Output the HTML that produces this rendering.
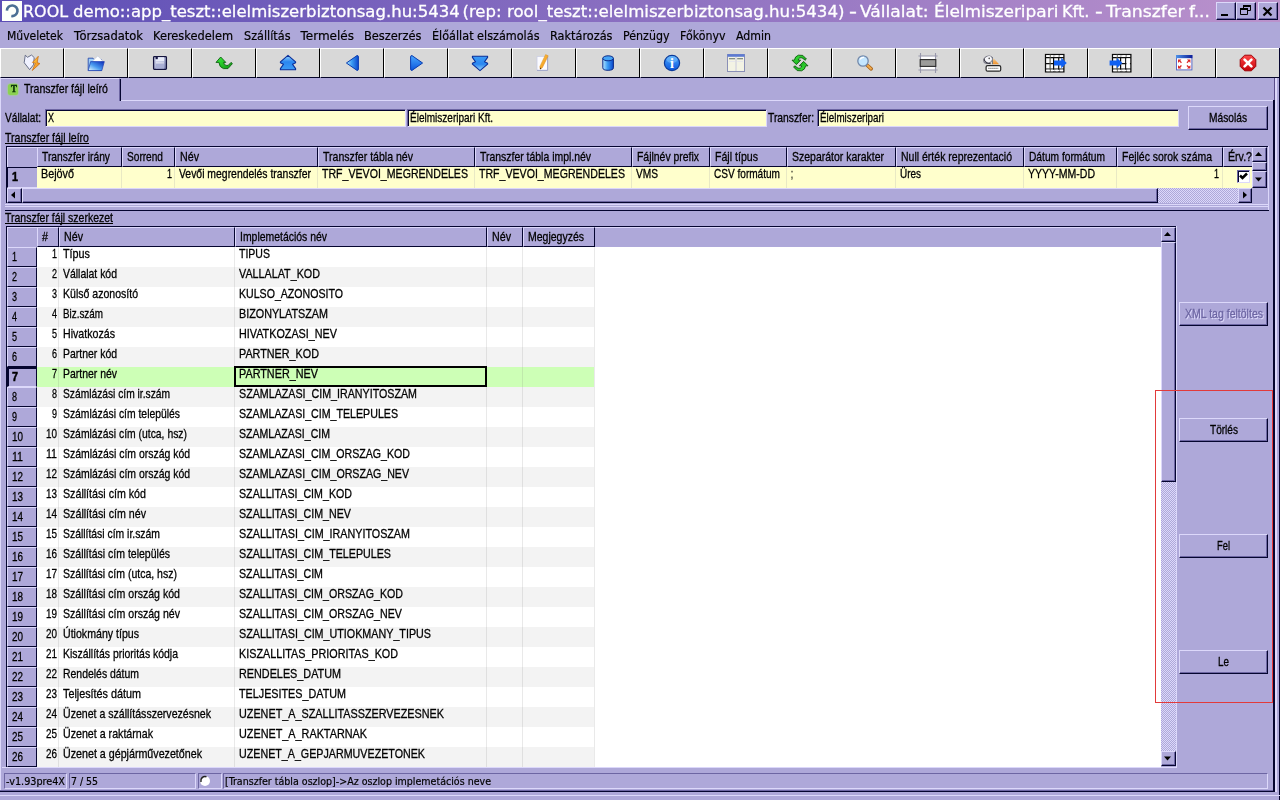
<!DOCTYPE html><html lang="hu"><head><meta charset="utf-8"><title>ROOL demo - Transzfer fájl leíró</title><style>
html,body{margin:0;padding:0}
body{width:1280px;height:800px;position:relative;overflow:hidden;background:#aea8d9;font-family:"Liberation Sans",sans-serif;color:#000}
body div{position:absolute;box-sizing:border-box}
svg{position:absolute;overflow:visible}
.t{position:absolute;white-space:nowrap;transform-origin:0 0;display:block}
.ms{font-size:13px;line-height:15px;-webkit-text-stroke-width:.3px}
.msb{font-size:13px;line-height:15px;font-weight:bold;-webkit-text-stroke-width:.55px}
.menu{font-family:"DejaVu Sans",sans-serif;font-size:12px;line-height:15px;-webkit-text-stroke-width:.2px}
.title{font-family:"DejaVu Sans",sans-serif;font-size:16.5px;line-height:21px;color:#fff;-webkit-text-stroke-width:.3px}
.st{font-family:"DejaVu Sans Condensed","DejaVu Sans",sans-serif;font-size:11px;line-height:14px;-webkit-text-stroke-width:.2px}

</style></head><body>
<div style="left:0px;top:0px;width:1280px;height:22px;background:linear-gradient(90deg,#5c4eb6,#bb92cc)"></div>
<div style="left:2px;top:1px;width:20px;height:20px;background:#fdfffb"><svg width="20" height="20" viewBox="0 0 20 20"><path d="M4.9 9.6 A5.3 5.3 0 1 1 9.3 15" fill="none" stroke="#4b6f94" stroke-width="2.6"/></svg></div>
<div style="left:1216px;top:2px;width:20px;height:18px;background:#aea8d9;border:1px solid;border-color:#dcd8fa #05052f #05052f #dcd8fa;box-shadow:inset -1px -1px 0 #6d66a3"><svg width="18" height="16"><rect x="4" y="11" width="7" height="2" fill="#000"/></svg></div>
<div style="left:1236px;top:2px;width:20px;height:18px;background:#aea8d9;border:1px solid;border-color:#dcd8fa #05052f #05052f #dcd8fa;box-shadow:inset -1px -1px 0 #6d66a3"><svg width="18" height="16"><path d="M6.5 2.5h7v5h-7z M6 3.5h8" fill="none" stroke="#000" stroke-width="1"/><rect x="6" y="2" width="8" height="2" fill="#000"/><rect x="3" y="5" width="8" height="7" fill="#aea8d9"/><path d="M3.5 6.5h7v5h-7z" fill="none" stroke="#000"/><rect x="3" y="5" width="8" height="2" fill="#000"/></svg></div>
<div style="left:1258px;top:2px;width:20px;height:18px;background:#aea8d9;border:1px solid;border-color:#dcd8fa #05052f #05052f #dcd8fa;box-shadow:inset -1px -1px 0 #6d66a3"><svg width="18" height="16"><path d="M4.5 4.5 L12.5 12.5 M12.5 4.5 L4.5 12.5" stroke="#000" stroke-width="2.2" fill="none"/></svg></div>
<div style="left:0px;top:48px;width:1280px;height:30px;background:#05052f"></div>
<div style="left:0px;top:48px;width:64px;height:30px;background:#d8d8d8;border:1px solid;border-color:#fff #000 #05052a #fff"></div>
<div style="left:64px;top:48px;width:64px;height:30px;background:#d8d8d8;border:1px solid;border-color:#fff #000 #05052a #fff"></div>
<div style="left:128px;top:48px;width:64px;height:30px;background:#d8d8d8;border:1px solid;border-color:#fff #000 #05052a #fff"></div>
<div style="left:192px;top:48px;width:64px;height:30px;background:#d8d8d8;border:1px solid;border-color:#fff #000 #05052a #fff"></div>
<div style="left:256px;top:48px;width:64px;height:30px;background:#d8d8d8;border:1px solid;border-color:#fff #000 #05052a #fff"></div>
<div style="left:320px;top:48px;width:64px;height:30px;background:#d8d8d8;border:1px solid;border-color:#fff #000 #05052a #fff"></div>
<div style="left:384px;top:48px;width:64px;height:30px;background:#d8d8d8;border:1px solid;border-color:#fff #000 #05052a #fff"></div>
<div style="left:448px;top:48px;width:64px;height:30px;background:#d8d8d8;border:1px solid;border-color:#fff #000 #05052a #fff"></div>
<div style="left:512px;top:48px;width:64px;height:30px;background:#d8d8d8;border:1px solid;border-color:#fff #000 #05052a #fff"></div>
<div style="left:576px;top:48px;width:64px;height:30px;background:#d8d8d8;border:1px solid;border-color:#fff #000 #05052a #fff"></div>
<div style="left:640px;top:48px;width:64px;height:30px;background:#d8d8d8;border:1px solid;border-color:#fff #000 #05052a #fff"></div>
<div style="left:704px;top:48px;width:64px;height:30px;background:#d8d8d8;border:1px solid;border-color:#fff #000 #05052a #fff"></div>
<div style="left:768px;top:48px;width:64px;height:30px;background:#d8d8d8;border:1px solid;border-color:#fff #000 #05052a #fff"></div>
<div style="left:832px;top:48px;width:64px;height:30px;background:#d8d8d8;border:1px solid;border-color:#fff #000 #05052a #fff"></div>
<div style="left:896px;top:48px;width:64px;height:30px;background:#d8d8d8;border:1px solid;border-color:#fff #000 #05052a #fff"></div>
<div style="left:960px;top:48px;width:64px;height:30px;background:#d8d8d8;border:1px solid;border-color:#fff #000 #05052a #fff"></div>
<div style="left:1024px;top:48px;width:64px;height:30px;background:#d8d8d8;border:1px solid;border-color:#fff #000 #05052a #fff"></div>
<div style="left:1088px;top:48px;width:64px;height:30px;background:#d8d8d8;border:1px solid;border-color:#fff #000 #05052a #fff"></div>
<div style="left:1152px;top:48px;width:64px;height:30px;background:#d8d8d8;border:1px solid;border-color:#fff #000 #05052a #fff"></div>
<div style="left:1216px;top:48px;width:64px;height:30px;background:#d8d8d8;border:1px solid;border-color:#fff #000 #05052a #fff"></div>
<div style="left:0px;top:78px;width:1px;height:714px;background:#dcd8fa"></div>
<div style="left:0px;top:78px;width:119px;height:1px;background:#dcd8fa"></div>
<div style="left:119px;top:79px;width:2px;height:22px;background:#05052f"></div>
<div style="left:119px;top:79px;width:1px;height:22px;background:#6d66a3"></div>
<div style="left:121px;top:100px;width:1153px;height:1px;background:#dcd8fa"></div>
<div style="left:1273px;top:100px;width:2px;height:692px;background:#05052f"></div>
<div style="left:1274px;top:78px;width:1px;height:22px;background:#5a4e8a"></div>
<div style="left:1275px;top:78px;width:2px;height:714px;background:#dcd8fa"></div>
<div style="left:1279px;top:48px;width:1px;height:752px;background:#05052f"></div>
<div style="left:0px;top:791px;width:1275px;height:1px;background:#05052f"></div>
<div style="left:0px;top:790px;width:1273px;height:1px;background:#6d66a3"></div>
<div style="left:0px;top:795px;width:1280px;height:1px;background:#dcd8fa"></div>
<div style="left:8px;top:84px;width:10px;height:11px;background:#8bd152;border-radius:2.5px;box-shadow:0 0 1.5px 0.5px #9fd878"></div>
<div style="left:45px;top:109px;width:361px;height:18px;background:#ffffcc;border:1px solid;border-color:#6d66a3 #dcd8fa #dcd8fa #6d66a3;box-shadow:inset 1px 1px 0 #05052f"></div>
<div style="left:407px;top:109px;width:360px;height:18px;background:#ffffcc;border:1px solid;border-color:#6d66a3 #dcd8fa #dcd8fa #6d66a3;box-shadow:inset 1px 1px 0 #05052f"></div>
<div style="left:817px;top:109px;width:362px;height:18px;background:#ffffcc;border:1px solid;border-color:#6d66a3 #dcd8fa #dcd8fa #6d66a3;box-shadow:inset 1px 1px 0 #05052f"></div>
<div style="left:1188px;top:106px;width:80px;height:24px;background:#aea8d9;border:1px solid;border-color:#dcd8fa #05052f #05052f #dcd8fa;box-shadow:inset -1px -1px 0 #6d66a3"></div>
<div style="left:5px;top:143px;width:84px;height:1px;background:#000"></div>
<div style="left:6px;top:146px;width:1262px;height:57px;background:#aea8d9;border:1px solid #05052f;border-right:none"></div>
<div style="left:1268px;top:146px;width:1px;height:64px;background:#dcd8fa"></div>
<div style="left:7px;top:147px;width:30px;height:20px;background:#aea8d9;border-top:1px solid #dcd8fa;border-left:1px solid #dcd8fa"></div>
<div style="left:37px;top:147px;width:85px;height:20px;background:#aea8d9;border:1px solid;border-color:#dcd8fa #05052f #05052f #dcd8fa"></div>
<div style="left:122px;top:147px;width:53px;height:20px;background:#aea8d9;border:1px solid;border-color:#dcd8fa #05052f #05052f #dcd8fa"></div>
<div style="left:175px;top:147px;width:143px;height:20px;background:#aea8d9;border:1px solid;border-color:#dcd8fa #05052f #05052f #dcd8fa"></div>
<div style="left:318px;top:147px;width:157px;height:20px;background:#aea8d9;border:1px solid;border-color:#dcd8fa #05052f #05052f #dcd8fa"></div>
<div style="left:475px;top:147px;width:157px;height:20px;background:#aea8d9;border:1px solid;border-color:#dcd8fa #05052f #05052f #dcd8fa"></div>
<div style="left:632px;top:147px;width:78px;height:20px;background:#aea8d9;border:1px solid;border-color:#dcd8fa #05052f #05052f #dcd8fa"></div>
<div style="left:710px;top:147px;width:77px;height:20px;background:#aea8d9;border:1px solid;border-color:#dcd8fa #05052f #05052f #dcd8fa"></div>
<div style="left:787px;top:147px;width:109px;height:20px;background:#aea8d9;border:1px solid;border-color:#dcd8fa #05052f #05052f #dcd8fa"></div>
<div style="left:896px;top:147px;width:128px;height:20px;background:#aea8d9;border:1px solid;border-color:#dcd8fa #05052f #05052f #dcd8fa"></div>
<div style="left:1024px;top:147px;width:93px;height:20px;background:#aea8d9;border:1px solid;border-color:#dcd8fa #05052f #05052f #dcd8fa"></div>
<div style="left:1117px;top:147px;width:106px;height:20px;background:#aea8d9;border:1px solid;border-color:#dcd8fa #05052f #05052f #dcd8fa"></div>
<div style="left:1223px;top:147px;width:38px;height:20px;background:#aea8d9;border:1px solid;border-color:#dcd8fa #05052f #05052f #dcd8fa"></div>
<div style="left:37px;top:167px;width:1215px;height:21px;background:#ffffcc"></div>
<div style="left:121px;top:167px;width:1px;height:21px;background:#e9e9c4"></div>
<div style="left:174px;top:167px;width:1px;height:21px;background:#e9e9c4"></div>
<div style="left:317px;top:167px;width:1px;height:21px;background:#e9e9c4"></div>
<div style="left:474px;top:167px;width:1px;height:21px;background:#e9e9c4"></div>
<div style="left:631px;top:167px;width:1px;height:21px;background:#e9e9c4"></div>
<div style="left:709px;top:167px;width:1px;height:21px;background:#e9e9c4"></div>
<div style="left:786px;top:167px;width:1px;height:21px;background:#e9e9c4"></div>
<div style="left:895px;top:167px;width:1px;height:21px;background:#e9e9c4"></div>
<div style="left:1023px;top:167px;width:1px;height:21px;background:#e9e9c4"></div>
<div style="left:1116px;top:167px;width:1px;height:21px;background:#e9e9c4"></div>
<div style="left:1222px;top:167px;width:1px;height:21px;background:#e9e9c4"></div>
<div style="left:1237px;top:170px;width:13px;height:13px;background:#fff;border:1px solid;border-color:#6d66a3 #dcd8fa #dcd8fa #6d66a3;box-shadow:inset 1px 1px 0 #05052f"><svg width="11" height="11" viewBox="0 0 11 11"><path d="M2 4.5 L4.5 7 L9 2.5" fill="none" stroke="#000" stroke-width="2.5"/></svg></div>
<div style="left:7px;top:167px;width:30px;height:21px;background:#aea8d9;border-left:1px solid #05052f;border-top:1px solid #05052f;border-bottom:1px solid #dcd8fa"></div>
<div style="left:1252px;top:147px;width:15px;height:41px;background:repeating-conic-gradient(#aea8d9 0% 25%,#dcd8fa 0% 50%) 0 0/2px 2px"></div>
<div style="left:1252px;top:147px;width:15px;height:15px;background:#aea8d9;border:1px solid;border-color:#dcd8fa #05052f #05052f #dcd8fa;box-shadow:inset -1px -1px 0 #6d66a3"><svg width="15" height="15"><path d="M2.0 8.0 L9.0 8.0 L5.5 4.0 Z" fill="#000"/></svg></div>
<div style="left:1252px;top:162px;width:15px;height:9px;background:#aea8d9;border:1px solid;border-color:#dcd8fa #05052f #05052f #dcd8fa;box-shadow:inset -1px -1px 0 #6d66a3"></div>
<div style="left:1252px;top:171px;width:15px;height:17px;background:#aea8d9;border:1px solid;border-color:#dcd8fa #05052f #05052f #dcd8fa;box-shadow:inset -1px -1px 0 #6d66a3"><svg width="15" height="17"><path d="M2.0 5.5 L9.0 5.5 L5.5 9.5 Z" fill="#000"/></svg></div>
<div style="left:7px;top:188px;width:1245px;height:15px;background:repeating-conic-gradient(#aea8d9 0% 25%,#dcd8fa 0% 50%) 0 0/2px 2px"></div>
<div style="left:7px;top:188px;width:15px;height:15px;background:#aea8d9;border:1px solid;border-color:#dcd8fa #05052f #05052f #dcd8fa;box-shadow:inset -1px -1px 0 #6d66a3"><svg width="15" height="15"><path d="M7.0 2.5 L7.0 9.5 L3.0 6.0 Z" fill="#000"/></svg></div>
<div style="left:22px;top:188px;width:1136px;height:15px;background:#aea8d9;border:1px solid;border-color:#dcd8fa #05052f #05052f #dcd8fa;box-shadow:inset -1px -1px 0 #6d66a3"></div>
<div style="left:1238px;top:188px;width:14px;height:15px;background:#aea8d9;border:1px solid;border-color:#dcd8fa #05052f #05052f #dcd8fa;box-shadow:inset -1px -1px 0 #6d66a3"><svg width="14" height="15"><path d="M4.0 2.5 L4.0 9.5 L8.0 6.0 Z" fill="#000"/></svg></div>
<div style="left:1252px;top:188px;width:16px;height:15px;background:#aea8d9"></div>
<div style="left:5px;top:204px;width:1264px;height:1px;background:#dcd8fa"></div>
<div style="left:5px;top:206px;width:1264px;height:1px;background:#dcd8fa"></div>
<div style="left:5px;top:210px;width:1264px;height:1px;background:#05052f"></div>
<div style="left:5px;top:223px;width:108px;height:1px;background:#000"></div>
<div style="left:6px;top:226px;width:1171px;height:1px;background:#05052f"></div>
<div style="left:6px;top:226px;width:1px;height:541px;background:#05052f"></div>
<div style="left:1176px;top:226px;width:1px;height:542px;background:#dcd8fa"></div>
<div style="left:2px;top:767px;width:1175px;height:1px;background:#dcd8fa"></div>
<div style="left:37px;top:247px;width:1124px;height:520px;background:#fff"></div>
<div style="left:7px;top:227px;width:30px;height:20px;background:#aea8d9;border-top:1px solid #dcd8fa;border-left:1px solid #dcd8fa"></div>
<div style="left:37px;top:227px;width:22px;height:20px;background:#aea8d9;border:1px solid;border-color:#dcd8fa #05052f #05052f #dcd8fa"></div>
<div style="left:59px;top:227px;width:176px;height:20px;background:#aea8d9;border:1px solid;border-color:#dcd8fa #05052f #05052f #dcd8fa"></div>
<div style="left:235px;top:227px;width:252px;height:20px;background:#aea8d9;border:1px solid;border-color:#dcd8fa #05052f #05052f #dcd8fa"></div>
<div style="left:487px;top:227px;width:36px;height:20px;background:#aea8d9;border:1px solid;border-color:#dcd8fa #05052f #05052f #dcd8fa"></div>
<div style="left:523px;top:227px;width:72px;height:20px;background:#aea8d9;border:1px solid;border-color:#dcd8fa #05052f #05052f #dcd8fa"></div>
<div style="left:595px;top:227px;width:566px;height:1px;background:#dcd8fa"></div>
<div style="left:7px;top:247px;width:30px;height:20px;background:#aea8d9;border:1px solid;border-color:#dcd8fa #05052f #05052f #dcd8fa"></div>
<div style="left:37px;top:267px;width:557px;height:20px;background:#f3f3f3"></div>
<div style="left:7px;top:267px;width:30px;height:20px;background:#aea8d9;border:1px solid;border-color:#dcd8fa #05052f #05052f #dcd8fa"></div>
<div style="left:7px;top:287px;width:30px;height:20px;background:#aea8d9;border:1px solid;border-color:#dcd8fa #05052f #05052f #dcd8fa"></div>
<div style="left:37px;top:307px;width:557px;height:20px;background:#f3f3f3"></div>
<div style="left:7px;top:307px;width:30px;height:20px;background:#aea8d9;border:1px solid;border-color:#dcd8fa #05052f #05052f #dcd8fa"></div>
<div style="left:7px;top:327px;width:30px;height:20px;background:#aea8d9;border:1px solid;border-color:#dcd8fa #05052f #05052f #dcd8fa"></div>
<div style="left:37px;top:347px;width:557px;height:20px;background:#f3f3f3"></div>
<div style="left:7px;top:347px;width:30px;height:20px;background:#aea8d9;border:1px solid;border-color:#dcd8fa #05052f #05052f #dcd8fa"></div>
<div style="left:37px;top:367px;width:557px;height:20px;background:#cdffb6"></div>
<div style="left:7px;top:367px;width:30px;height:20px;background:#aea8d9;border-left:2px solid #05052f;border-top:2px solid #05052f;border-right:1px solid #05052f;border-bottom:1px solid #dcd8fa"></div>
<div style="left:37px;top:387px;width:557px;height:20px;background:#f3f3f3"></div>
<div style="left:7px;top:387px;width:30px;height:20px;background:#aea8d9;border:1px solid;border-color:#dcd8fa #05052f #05052f #dcd8fa"></div>
<div style="left:7px;top:407px;width:30px;height:20px;background:#aea8d9;border:1px solid;border-color:#dcd8fa #05052f #05052f #dcd8fa"></div>
<div style="left:37px;top:427px;width:557px;height:20px;background:#f3f3f3"></div>
<div style="left:7px;top:427px;width:30px;height:20px;background:#aea8d9;border:1px solid;border-color:#dcd8fa #05052f #05052f #dcd8fa"></div>
<div style="left:7px;top:447px;width:30px;height:20px;background:#aea8d9;border:1px solid;border-color:#dcd8fa #05052f #05052f #dcd8fa"></div>
<div style="left:37px;top:467px;width:557px;height:20px;background:#f3f3f3"></div>
<div style="left:7px;top:467px;width:30px;height:20px;background:#aea8d9;border:1px solid;border-color:#dcd8fa #05052f #05052f #dcd8fa"></div>
<div style="left:7px;top:487px;width:30px;height:20px;background:#aea8d9;border:1px solid;border-color:#dcd8fa #05052f #05052f #dcd8fa"></div>
<div style="left:37px;top:507px;width:557px;height:20px;background:#f3f3f3"></div>
<div style="left:7px;top:507px;width:30px;height:20px;background:#aea8d9;border:1px solid;border-color:#dcd8fa #05052f #05052f #dcd8fa"></div>
<div style="left:7px;top:527px;width:30px;height:20px;background:#aea8d9;border:1px solid;border-color:#dcd8fa #05052f #05052f #dcd8fa"></div>
<div style="left:37px;top:547px;width:557px;height:20px;background:#f3f3f3"></div>
<div style="left:7px;top:547px;width:30px;height:20px;background:#aea8d9;border:1px solid;border-color:#dcd8fa #05052f #05052f #dcd8fa"></div>
<div style="left:7px;top:567px;width:30px;height:20px;background:#aea8d9;border:1px solid;border-color:#dcd8fa #05052f #05052f #dcd8fa"></div>
<div style="left:37px;top:587px;width:557px;height:20px;background:#f3f3f3"></div>
<div style="left:7px;top:587px;width:30px;height:20px;background:#aea8d9;border:1px solid;border-color:#dcd8fa #05052f #05052f #dcd8fa"></div>
<div style="left:7px;top:607px;width:30px;height:20px;background:#aea8d9;border:1px solid;border-color:#dcd8fa #05052f #05052f #dcd8fa"></div>
<div style="left:37px;top:627px;width:557px;height:20px;background:#f3f3f3"></div>
<div style="left:7px;top:627px;width:30px;height:20px;background:#aea8d9;border:1px solid;border-color:#dcd8fa #05052f #05052f #dcd8fa"></div>
<div style="left:7px;top:647px;width:30px;height:20px;background:#aea8d9;border:1px solid;border-color:#dcd8fa #05052f #05052f #dcd8fa"></div>
<div style="left:37px;top:667px;width:557px;height:20px;background:#f3f3f3"></div>
<div style="left:7px;top:667px;width:30px;height:20px;background:#aea8d9;border:1px solid;border-color:#dcd8fa #05052f #05052f #dcd8fa"></div>
<div style="left:7px;top:687px;width:30px;height:20px;background:#aea8d9;border:1px solid;border-color:#dcd8fa #05052f #05052f #dcd8fa"></div>
<div style="left:37px;top:707px;width:557px;height:20px;background:#f3f3f3"></div>
<div style="left:7px;top:707px;width:30px;height:20px;background:#aea8d9;border:1px solid;border-color:#dcd8fa #05052f #05052f #dcd8fa"></div>
<div style="left:7px;top:727px;width:30px;height:20px;background:#aea8d9;border:1px solid;border-color:#dcd8fa #05052f #05052f #dcd8fa"></div>
<div style="left:37px;top:747px;width:557px;height:20px;background:#f3f3f3"></div>
<div style="left:7px;top:747px;width:30px;height:20px;background:#aea8d9;border:1px solid;border-color:#dcd8fa #05052f #05052f #dcd8fa"></div>
<div style="left:58px;top:247px;width:1px;height:520px;background:rgba(120,120,120,.16)"></div>
<div style="left:234px;top:247px;width:1px;height:520px;background:rgba(120,120,120,.16)"></div>
<div style="left:486px;top:247px;width:1px;height:520px;background:rgba(120,120,120,.16)"></div>
<div style="left:522px;top:247px;width:1px;height:520px;background:rgba(120,120,120,.16)"></div>
<div style="left:594px;top:247px;width:1px;height:520px;background:rgba(120,120,120,.16)"></div>
<div style="left:234px;top:366px;width:253px;height:21px;border:2px solid #000"></div>
<div style="left:1161px;top:227px;width:15px;height:540px;background:repeating-conic-gradient(#aea8d9 0% 25%,#dcd8fa 0% 50%) 0 0/2px 2px"></div>
<div style="left:1161px;top:227px;width:15px;height:15px;background:#aea8d9;border:1px solid;border-color:#dcd8fa #05052f #05052f #dcd8fa;box-shadow:inset -1px -1px 0 #6d66a3"><svg width="15" height="15"><path d="M2.0 8.0 L9.0 8.0 L5.5 4.0 Z" fill="#000"/></svg></div>
<div style="left:1161px;top:242px;width:15px;height:240px;background:#aea8d9;border:1px solid;border-color:#dcd8fa #05052f #05052f #dcd8fa;box-shadow:inset -1px -1px 0 #6d66a3"></div>
<div style="left:1161px;top:751px;width:15px;height:15px;background:#aea8d9;border:1px solid;border-color:#dcd8fa #05052f #05052f #dcd8fa;box-shadow:inset -1px -1px 0 #6d66a3"><svg width="15" height="15"><path d="M2.0 4.5 L9.0 4.5 L5.5 8.5 Z" fill="#000"/></svg></div>
<div style="left:1161px;top:766px;width:15px;height:1px;background:#aea8d9"></div>
<div style="left:1179px;top:302px;width:89px;height:24px;background:#aea8d9;border:1px solid;border-color:#dcd8fa #05052f #05052f #dcd8fa;box-shadow:inset -1px -1px 0 #6d66a3"></div>
<div style="left:1179px;top:418px;width:89px;height:24px;background:#aea8d9;border:1px solid;border-color:#dcd8fa #05052f #05052f #dcd8fa;box-shadow:inset -1px -1px 0 #6d66a3"></div>
<div style="left:1179px;top:534px;width:89px;height:24px;background:#aea8d9;border:1px solid;border-color:#dcd8fa #05052f #05052f #dcd8fa;box-shadow:inset -1px -1px 0 #6d66a3"></div>
<div style="left:1179px;top:650px;width:89px;height:24px;background:#aea8d9;border:1px solid;border-color:#dcd8fa #05052f #05052f #dcd8fa;box-shadow:inset -1px -1px 0 #6d66a3"></div>
<div style="left:1155px;top:390px;width:118px;height:313px;border:1px solid #e23a3a"></div>
<div style="left:4px;top:773px;width:63px;height:16px;border:1px solid;border-color:#6d66a3 #dcd8fa #dcd8fa #6d66a3"></div>
<div style="left:69px;top:773px;width:127px;height:16px;border:1px solid;border-color:#6d66a3 #dcd8fa #dcd8fa #6d66a3"></div>
<div style="left:198px;top:773px;width:24px;height:16px;border:1px solid;border-color:#6d66a3 #dcd8fa #dcd8fa #6d66a3"></div>
<div style="left:223px;top:773px;width:1045px;height:16px;border:1px solid;border-color:#6d66a3 #dcd8fa #dcd8fa #6d66a3"></div>
<div style="left:200px;top:776px;width:10px;height:10px;background:#fff;border-radius:50%"><svg width="10" height="10"><path d="M1 6 A4.2 4.2 0 0 1 6.5 0.8" fill="none" stroke="#222" stroke-width="1.6"/></svg></div>
<svg width="0" height="0" style="left:0;top:0"><defs><linearGradient id="gb" x1="0" y1="0" x2="0" y2="1"><stop offset="0" stop-color="#4aa8ff"/><stop offset="1" stop-color="#0c55dc"/></linearGradient><linearGradient id="gbh" x1="0" y1="0" x2="1" y2="0"><stop offset="0" stop-color="#b4e6ff"/><stop offset=".45" stop-color="#3c9cf4"/><stop offset="1" stop-color="#0b48cc"/></linearGradient><linearGradient id="go" x1="0" y1="0" x2="1" y2="1"><stop offset="0" stop-color="#ffd84a"/><stop offset="1" stop-color="#ee7a10"/></linearGradient><linearGradient id="gg" x1="0" y1="0" x2="0" y2="1"><stop offset="0" stop-color="#4ae04a"/><stop offset="1" stop-color="#0c8a14"/></linearGradient><linearGradient id="gr" x1="0" y1="0" x2="0" y2="1"><stop offset="0" stop-color="#ff4848"/><stop offset="1" stop-color="#c40008"/></linearGradient><linearGradient id="gf" x1="0" y1="0" x2="1" y2="1"><stop offset="0" stop-color="#dfe3f6"/><stop offset="1" stop-color="#7b82b4"/></linearGradient><linearGradient id="gt" x1="0" y1="0" x2="1" y2="0"><stop offset="0" stop-color="#4e92e8"/><stop offset="1" stop-color="#0c1c98"/></linearGradient><linearGradient id="gfl" x1="0" y1="1" x2="1" y2="0"><stop offset="0" stop-color="#eafcff"/><stop offset=".45" stop-color="#4a9cf0"/><stop offset="1" stop-color="#0a28b8"/></linearGradient><linearGradient id="gb2" x1="0" y1="0" x2="0" y2="1"><stop offset="0" stop-color="#9ad8ff"/><stop offset=".45" stop-color="#2a86f0"/><stop offset="1" stop-color="#3c9cf6"/></linearGradient><linearGradient id="gg2" x1="0" y1="0" x2="1" y2="1"><stop offset="0" stop-color="#3cf03c"/><stop offset="1" stop-color="#0e9612"/></linearGradient><linearGradient id="gtri" x1="0" y1="0" x2="0" y2="1"><stop offset="0" stop-color="#cfe4f4"/><stop offset=".55" stop-color="#f4b060"/><stop offset="1" stop-color="#ee9430"/></linearGradient></defs></svg>
<svg style="left:22px;top:53px" width="20" height="20" viewBox="0 0 20 20"><path d="M3.25 2.2 L5.5 4.3 L9.55 2.05 L12.2 4.6 L11.5 11.8 L7.6 16.6 L2.2 9.7 Z" fill="#f0f2ff" stroke="#5a627e" stroke-width=".9"/><path d="M16.3 3.25 L10.4 9.4 L13.4 10.2 L10.3 17.5 L17.9 10.6 L15.2 9.6 Z" fill="url(#go)" stroke="#c8640c" stroke-width=".7"/></svg>
<svg style="left:86px;top:53px" width="20" height="20" viewBox="0 0 20 20"><path d="M2.2 5.2 H7 L8.2 6.6 H15.5 V17.5 H2.2 Z" fill="#9fd0f7" stroke="#2a4cae" stroke-width=".9"/><path d="M6.5 8 L11.8 3 L16.2 7.4 L15 10.5 Z" fill="#fff" stroke="#b0bedc" stroke-width=".5"/><path d="M4.6 8.6 H18.3 L15.8 17.6 H2.2 Z" fill="url(#gfl)" stroke="#1c3cb0" stroke-width=".7"/></svg>
<svg style="left:150px;top:53px" width="20" height="20" viewBox="0 0 20 20"><rect x="3.6" y="3.6" width="12.8" height="12.8" rx=".8" fill="url(#gf)" stroke="#14143e" stroke-width="1.3"/><rect x="6" y="4.2" width="8" height="4.2" fill="#e8ecfa"/><rect x="5.6" y="3.8" width="2.2" height="2.4" fill="#1a1a48"/><rect x="6" y="10.4" width="8" height="5.2" fill="#a9afd4"/><rect x="6" y="9.4" width="8" height="1" fill="#ffffff" opacity=".8"/></svg>
<svg style="left:214px;top:53px" width="20" height="20" viewBox="0 0 20 20"><path d="M6.7 4 L11.8 9.4 L9.6 9.4 Q10 12.2 12.2 12.4 L14.2 12.4 L17 9.4 L18.4 10.6 L14 15.6 L9.4 15.6 Q5.4 14.4 4.9 9.4 L2 9.4 Z" fill="url(#gg2)" stroke="#0b5e0e" stroke-width=".9" stroke-linejoin="round"/></svg>
<svg style="left:278px;top:53px" width="20" height="20" viewBox="0 0 20 20"><path d="M10 2.4 L17.6 8.8 L17.6 9.8 L14.5 11.2 L17.6 15.6 L17.6 16.8 L2.4 16.8 L2.4 15.6 L5.5 11.2 L2.4 9.8 L2.4 8.8 Z" fill="url(#gb2)" stroke="#0a2e98" stroke-width="1.1" stroke-linejoin="round"/></svg>
<svg style="left:343.5px;top:53px" width="20" height="20" viewBox="0 0 20 20"><path d="M2.4 10 L13 2.6 Q14.4 2.4 14.4 4 L14.4 16 Q14.4 17.6 13 17.4 Z" fill="url(#gbh)" stroke="#0a3cb0" stroke-width="1" stroke-linejoin="round"/></svg>
<svg style="left:405px;top:53px" width="20" height="20" viewBox="0 0 20 20"><g transform="translate(20,0) scale(-1,1)"><path d="M2.4 10 L13 2.6 Q14.4 2.4 14.4 4 L14.4 16 Q14.4 17.6 13 17.4 Z" fill="url(#gb)" stroke="#0a3cb0" stroke-width="1" stroke-linejoin="round"/></g></svg>
<svg style="left:470px;top:53px" width="20" height="20" viewBox="0 0 20 20"><g transform="translate(0,20) scale(1,-1)"><path d="M10 2.4 L17.6 8.8 L17.6 9.8 L14.5 11.2 L17.6 15.6 L17.6 16.8 L2.4 16.8 L2.4 15.6 L5.5 11.2 L2.4 9.8 L2.4 8.8 Z" fill="url(#gb2)" stroke="#0a2e98" stroke-width="1.1" stroke-linejoin="round"/></g></svg>
<svg style="left:534px;top:53px" width="20" height="20" viewBox="0 0 20 20"><path d="M3 3.5 H13.6 V17.4 H3 Z" fill="#fbfbff" stroke="#c9cde4" stroke-width=".8"/><path d="M13.6 3.5 V17.4 H3" fill="none" stroke="#9aa0c4" stroke-width=".9"/><path d="M11.6 1.6 L14.2 2.8 L8.4 14.6 L6.2 16.2 L5.9 13.4 Z" fill="url(#go)" stroke="#d88a1c" stroke-width=".5"/><path d="M6.2 16.2 L5.9 14.4 L7.4 15.2 Z" fill="#3a2a10"/></svg>
<svg style="left:598px;top:53px" width="20" height="20" viewBox="0 0 20 20"><path d="M4.8 5.3 V14.8 Q4.8 17.3 10.1 17.3 Q15.4 17.3 15.4 14.8 V5.3 Z" fill="url(#gbh)" stroke="#0a2a88" stroke-width="1"/><ellipse cx="10.1" cy="5.3" rx="5.3" ry="2.5" fill="#46a4f6" stroke="#0a2a88" stroke-width="1"/></svg>
<svg style="left:662px;top:53px" width="20" height="20" viewBox="0 0 20 20"><circle cx="10" cy="10" r="7.6" fill="url(#gb)" stroke="#0a3a9a" stroke-width="1.2"/><ellipse cx="10" cy="6.5" rx="5.5" ry="3.5" fill="#8ccbff" opacity=".45"/><text x="10" y="15.2" text-anchor="middle" font-family="Liberation Serif,serif" font-weight="bold" font-size="14" fill="#fff">i</text></svg>
<svg style="left:722px;top:53px" width="24" height="20" viewBox="0 0 24 20"><rect x="5.5" y="1.5" width="17" height="17" fill="#f3f3e4" stroke="#8a8fb6" stroke-width="1"/><rect x="5.5" y="1.2" width="17" height="2.6" fill="#5c7ad2"/><path d="M14 4 V18" stroke="#c8c8dc" stroke-width="1"/><path d="M7 5.8 H13 M15.2 5.8 H21" stroke="#5f6e66" stroke-width="1.1"/><path d="M7 8.5H13M15.2 8.5H21" stroke="#e2e2ee" stroke-width=".8"/></svg>
<svg style="left:790px;top:53px" width="20" height="20" viewBox="0 0 20 20"><path d="M6.4 11.6 L2 7.2 L4.4 7.2 Q4.8 3.4 8.4 2.2 L12.8 2.4 L16.4 6 L15.2 7.2 L12 4.8 L9.8 4.8 Q8.4 5.6 8.4 7.2 L10.6 7.2 Z" fill="url(#gg2)" stroke="#0b5a0c" stroke-width=".9" stroke-linejoin="round"/><g transform="rotate(180 10 10)"><path d="M6.4 11.6 L2 7.2 L4.4 7.2 Q4.8 3.4 8.4 2.2 L12.8 2.4 L16.4 6 L15.2 7.2 L12 4.8 L9.8 4.8 Q8.4 5.6 8.4 7.2 L10.6 7.2 Z" fill="url(#gg2)" stroke="#0b5a0c" stroke-width=".9" stroke-linejoin="round"/></g></svg>
<svg style="left:854px;top:53px" width="20" height="20" viewBox="0 0 20 20"><path d="M13.2 12.2 L17.2 15.9" stroke="#a8641c" stroke-width="3.6" stroke-linecap="round"/><path d="M13.6 12.6 L17 15.7" stroke="#f0aa4c" stroke-width="2" stroke-linecap="round"/><circle cx="9" cy="8" r="5.2" fill="#c4e6ff" stroke="#7288aa" stroke-width="1.3"/><path d="M6 6.4 Q7.4 4.2 10 4.4" stroke="#fff" stroke-width="1.4" fill="none"/></svg>
<svg style="left:915.5px;top:53px" width="24" height="20" viewBox="0 0 24 20"><rect x="4" y="3" width="16" height="13.6" fill="#fff"/><path d="M4.5 0 V20 M19.5 0 V20 M2.4 3 H21.6 M2.4 17 H21.6" stroke="#9898ac" stroke-width="1.1"/><rect x="4.2" y="6.6" width="15.6" height="6.8" fill="#9c9c9a" stroke="#2a2a2a" stroke-width="1.1"/></svg>
<svg style="left:980.5px;top:53px" width="24" height="20" viewBox="0 0 24 20"><path d="M11.5 4 V11.2 H18.1 Z" fill="url(#gtri)"/><path d="M11.5 4 V11.2" stroke="#5a6a78" stroke-width=".8"/><ellipse cx="7" cy="6.7" rx="4.6" ry="3.5" transform="rotate(-32 7 6.7)" fill="#f6f6fa" stroke="#70707e" stroke-width=".9"/><path d="M3 5.6 Q3.6 10.4 9.6 10.6" stroke="#3c3c48" stroke-width="1.1" fill="none"/><circle cx="8.2" cy="5.4" r=".8" fill="#555"/><rect x="5.1" y="12.6" width="14.6" height="5.6" rx="1.5" fill="#fff" stroke="#262626" stroke-width="1.2"/><path d="M7.4 15.4 H17.6" stroke="#666" stroke-width="1.3" stroke-dasharray="1.1 .9"/></svg>
<svg style="left:1044px;top:53px" width="26" height="20" viewBox="0 0 26 20"><g transform="translate(1,1)"><rect x="0.5" y="0.5" width="18.4" height="17.4" fill="#fafafa" stroke="#0c0c0c" stroke-width="1.25"/><path d="M0.5 3.6 H18.9 M0.5 9.6 H18.9 M0.5 15 H18.9 M8.6 .5 V17.9 M13.7 .5 V17.9" stroke="#0c0c0c" stroke-width="1.2" fill="none"/><path d="M5.1 .5 V17.9" stroke="#55554a" stroke-width="1.1"/><path d="M1.4 2H18M1.4 16.5H18" stroke="#fff" stroke-width="1.3" stroke-dasharray="3.4 1.2"/></g><g transform="translate(10,10)"><path d="M0 -2.5 H7.2 V-5.3 L12.8 0 L7.2 5.3 V2.5 H0 Z" fill="#1060f2"/></g></svg>
<svg style="left:1109px;top:53px" width="26" height="20" viewBox="0 0 26 20"><g transform="translate(3,1)"><rect x="0.5" y="0.5" width="18.4" height="17.4" fill="#fafafa" stroke="#0c0c0c" stroke-width="1.25"/><path d="M0.5 3.6 H18.9 M0.5 9.6 H18.9 M0.5 15 H18.9 M8.6 .5 V17.9 M13.7 .5 V17.9" stroke="#0c0c0c" stroke-width="1.2" fill="none"/><path d="M5.1 .5 V17.9" stroke="#55554a" stroke-width="1.1"/><path d="M1.4 2H18M1.4 16.5H18" stroke="#fff" stroke-width="1.3" stroke-dasharray="3.4 1.2"/><rect x="14.5" y="4.4" width="3.4" height="9.6" fill="#fff"/></g><g transform="translate(0.6,10)"><path d="M0 -2.5 H7.2 V-5.3 L12.8 0 L7.2 5.3 V2.5 H0 Z" fill="#1060f2"/></g></svg>
<svg style="left:1174px;top:53px" width="20" height="20" viewBox="0 0 20 20"><rect x="2.5" y="2.5" width="15.4" height="14.4" fill="#fff" stroke="#5a6cc8" stroke-width="1"/><rect x="2" y="2" width="16.4" height="3.2" fill="url(#gt)"/><g fill="#dc2828"><path d="M4 6.6 h3.4 l-1.1 1.1 1.6 1.6 -.9 .9 -1.6 -1.6 -1.4 1.4 Z"/><path d="M16.4 6.6 h-3.4 l1.1 1.1 -1.6 1.6 .9 .9 1.6 -1.6 1.4 1.4 Z"/><path d="M4 15.6 h3.4 l-1.1 -1.1 1.6 -1.6 -.9 -.9 -1.6 1.6 -1.4 -1.4 Z"/><path d="M16.4 15.6 h-3.4 l1.1 -1.1 -1.6 -1.6 .9 -.9 1.6 1.6 1.4 -1.4 Z"/></g></svg>
<svg style="left:1238px;top:53px" width="20" height="20" viewBox="0 0 20 20"><path d="M6.6 2.2 H13.4 L17.8 6.6 V13.4 L13.4 17.8 H6.6 L2.2 13.4 V6.6 Z" fill="url(#gr)" stroke="#9c0006" stroke-width="1"/><path d="M6.6 6.6 L13.4 13.4 M13.4 6.6 L6.6 13.4" stroke="#fff" stroke-width="2.7" stroke-linecap="round"/></svg>
<div id="txt" style="left:0;top:0;width:1280px;height:800px;will-change:transform">
<span class="t title" id="t0" style="left:23px;top:1px;transform:scaleX(0.9670);">ROOL</span>
<span class="t title" id="t1" style="left:73px;top:1px;">demo::app_teszt::elelmiszerbiztonsag.hu:5434</span>
<span class="t title" id="t2" style="left:462.5px;top:1px;">(rep:</span>
<span class="t title" id="t3" style="left:507px;top:1px;transform:scaleX(1.0065);">rool_teszt::elelmiszerbiztonsag.hu:5434)</span>
<span class="t title" id="t4" style="left:849px;top:1px;transform:scaleX(1.3403);">-</span>
<span class="t title" id="t5" style="left:860px;top:1px;transform:scaleX(1.0344);">Vállalat:</span>
<span class="t title" id="t6" style="left:933.5px;top:1px;transform:scaleX(1.0269);">Élelmiszeripari</span>
<span class="t title" id="t7" style="left:1062px;top:1px;transform:scaleX(0.9764);">Kft.</span>
<span class="t title" id="t8" style="left:1094.5px;top:1px;transform:scaleX(1.3068);">-</span>
<span class="t title" id="t9" style="left:1106px;top:1px;transform:scaleX(1.0484);">Transzfer</span>
<span class="t title" id="t10" style="left:1189px;top:1px;transform:scaleX(1.0224);">f...</span>
<span class="t menu" id="t11" style="left:7px;top:29px;transform:scaleX(0.9003);">Műveletek</span>
<span class="t menu" id="t12" style="left:74px;top:29px;transform:scaleX(0.9596);">Törzsadatok</span>
<span class="t menu" id="t13" style="left:153px;top:29px;transform:scaleX(0.9492);">Kereskedelem</span>
<span class="t menu" id="t14" style="left:243.5px;top:29px;transform:scaleX(0.9376);">Szállítás</span>
<span class="t menu" id="t15" style="left:300.5px;top:29px;">Termelés</span>
<span class="t menu" id="t16" style="left:364px;top:29px;transform:scaleX(0.9516);">Beszerzés</span>
<span class="t menu" id="t17" style="left:431.5px;top:29px;transform:scaleX(0.9368);">Élőállat elszámolás</span>
<span class="t menu" id="t18" style="left:549.5px;top:29px;transform:scaleX(0.9418);">Raktározás</span>
<span class="t menu" id="t19" style="left:622.5px;top:29px;transform:scaleX(0.9222);">Pénzügy</span>
<span class="t menu" id="t20" style="left:679.5px;top:29px;transform:scaleX(0.9192);">Főkönyv</span>
<span class="t menu" id="t21" style="left:736px;top:29px;transform:scaleX(0.9150);">Admin</span>
<span class="t msb" id="t22" style="left:10.5px;top:81.4px;transform:scaleX(0.8267);font-family:'Liberation Serif',serif;font-size:10.5px;color:#0a3208;">T</span>
<span class="t ms" id="t23" style="left:24px;top:81px;transform:scaleX(0.8111);">Transzfer fájl leíró</span>
<span class="t ms" id="t24" style="left:5px;top:110px;transform:scaleX(0.7784);">Vállalat:</span>
<span class="t ms" id="t25" style="left:47.5px;top:110px;transform:scaleX(0.6919);">X</span>
<span class="t ms" id="t26" style="left:409.5px;top:110px;transform:scaleX(0.7711);">Élelmiszeripari Kft.</span>
<span class="t ms" id="t27" style="left:768px;top:110px;transform:scaleX(0.7927);">Transzfer:</span>
<span class="t ms" id="t28" style="left:819.5px;top:110px;transform:scaleX(0.7571);">Élelmiszeripari</span>
<span class="t ms" id="t29" style="left:1209px;top:110px;transform:scaleX(0.7848);">Másolás</span>
<span class="t ms" id="t30" style="left:5px;top:130px;transform:scaleX(0.8111);">Transzfer fájl leíro</span>
<span class="t ms" id="t31" style="left:42px;top:149px;transform:scaleX(0.7887);">Transzfer irány</span>
<span class="t ms" id="t32" style="left:127px;top:149px;transform:scaleX(0.7784);">Sorrend</span>
<span class="t ms" id="t33" style="left:180px;top:149px;transform:scaleX(0.8216);">Név</span>
<span class="t ms" id="t34" style="left:323px;top:149px;transform:scaleX(0.8123);">Transzfer tábla név</span>
<span class="t ms" id="t35" style="left:480px;top:149px;transform:scaleX(0.8029);">Transzfer tábla impl.név</span>
<span class="t ms" id="t36" style="left:637px;top:149px;transform:scaleX(0.8019);">Fájlnév prefix</span>
<span class="t ms" id="t37" style="left:715px;top:149px;transform:scaleX(0.8152);">Fájl típus</span>
<span class="t ms" id="t38" style="left:792px;top:149px;transform:scaleX(0.8058);">Szeparátor karakter</span>
<span class="t ms" id="t39" style="left:901px;top:149px;transform:scaleX(0.8085);">Null érték reprezentació</span>
<span class="t ms" id="t40" style="left:1029px;top:149px;transform:scaleX(0.7850);">Dátum formátum</span>
<span class="t ms" id="t41" style="left:1122px;top:149px;transform:scaleX(0.8037);">Fejléc sorok száma</span>
<span class="t ms" id="t42" style="left:1228px;top:149px;transform:scaleX(0.8166);">Érv.?</span>
<span class="t ms" id="t43" style="left:41px;top:166px;transform:scaleX(0.8302);">Bejövő</span>
<span class="t ms" id="t44" style="left:179px;top:166px;transform:scaleX(0.8011);">Vevői megrendelés transzfer</span>
<span class="t ms" id="t45" style="left:322px;top:166px;transform:scaleX(0.8149);">TRF_VEVOI_MEGRENDELES</span>
<span class="t ms" id="t46" style="left:479px;top:166px;transform:scaleX(0.8149);">TRF_VEVOI_MEGRENDELES</span>
<span class="t ms" id="t47" style="left:636px;top:166px;transform:scaleX(0.7809);">VMS</span>
<span class="t ms" id="t48" style="left:714px;top:166px;transform:scaleX(0.7742);">CSV formátum</span>
<span class="t ms" id="t49" style="left:791px;top:166px;transform:scaleX(0.5517);">;</span>
<span class="t ms" id="t50" style="left:900px;top:166px;transform:scaleX(0.7649);">Üres</span>
<span class="t ms" id="t51" style="left:1028px;top:166px;transform:scaleX(0.8112);">YYYY-MM-DD</span>
<span class="t ms" id="t52" style="left:166.5px;top:166px;transform:scaleX(0.6911);">1</span>
<span class="t ms" id="t53" style="left:1213.5px;top:166px;transform:scaleX(0.6911);">1</span>
<span class="t msb" id="t54" style="left:12px;top:169px;transform:scaleX(0.8294);">1</span>
<span class="t ms" id="t55" style="left:5px;top:210px;transform:scaleX(0.8065);">Transzfer fájl szerkezet</span>
<span class="t ms" id="t56" style="left:42px;top:229px;transform:scaleX(0.8294);">#</span>
<span class="t ms" id="t57" style="left:64px;top:229px;transform:scaleX(0.8216);">Név</span>
<span class="t ms" id="t58" style="left:240px;top:229px;transform:scaleX(0.8027);">Implemetációs név</span>
<span class="t ms" id="t59" style="left:492px;top:229px;transform:scaleX(0.8216);">Név</span>
<span class="t ms" id="t60" style="left:528px;top:229px;transform:scaleX(0.8072);">Megjegyzés</span>
<span class="t ms" id="t61" style="left:12px;top:249px;transform:scaleX(0.6911);">1</span>
<span class="t ms" id="t62" style="left:51.5px;top:246px;transform:scaleX(0.6911);">1</span>
<span class="t ms" id="t63" style="left:63px;top:246px;transform:scaleX(0.8304);">Típus</span>
<span class="t ms" id="t64" style="left:238.5px;top:246px;transform:scaleX(0.8095);">TIPUS</span>
<span class="t ms" id="t65" style="left:12px;top:269px;transform:scaleX(0.6911);">2</span>
<span class="t ms" id="t66" style="left:51.5px;top:266px;transform:scaleX(0.6911);">2</span>
<span class="t ms" id="t67" style="left:63px;top:266px;transform:scaleX(0.8033);">Vállalat kód</span>
<span class="t ms" id="t68" style="left:238.5px;top:266px;transform:scaleX(0.8282);">VALLALAT_KOD</span>
<span class="t ms" id="t69" style="left:12px;top:289px;transform:scaleX(0.6911);">3</span>
<span class="t ms" id="t70" style="left:51.5px;top:286px;transform:scaleX(0.6911);">3</span>
<span class="t ms" id="t71" style="left:63px;top:286px;transform:scaleX(0.8107);">Külső azonosító</span>
<span class="t ms" id="t72" style="left:238.5px;top:286px;transform:scaleX(0.8148);">KULSO_AZONOSITO</span>
<span class="t ms" id="t73" style="left:12px;top:309px;transform:scaleX(0.6911);">4</span>
<span class="t ms" id="t74" style="left:51.5px;top:306px;transform:scaleX(0.6911);">4</span>
<span class="t ms" id="t75" style="left:63px;top:306px;transform:scaleX(0.7585);">Biz.szám</span>
<span class="t ms" id="t76" style="left:238.5px;top:306px;transform:scaleX(0.8288);">BIZONYLATSZAM</span>
<span class="t ms" id="t77" style="left:12px;top:329px;transform:scaleX(0.6911);">5</span>
<span class="t ms" id="t78" style="left:51.5px;top:326px;transform:scaleX(0.6911);">5</span>
<span class="t ms" id="t79" style="left:63px;top:326px;transform:scaleX(0.8179);">Hivatkozás</span>
<span class="t ms" id="t80" style="left:238.5px;top:326px;transform:scaleX(0.8305);">HIVATKOZASI_NEV</span>
<span class="t ms" id="t81" style="left:12px;top:349px;transform:scaleX(0.6911);">6</span>
<span class="t ms" id="t82" style="left:51.5px;top:346px;transform:scaleX(0.6911);">6</span>
<span class="t ms" id="t83" style="left:63px;top:346px;transform:scaleX(0.8035);">Partner kód</span>
<span class="t ms" id="t84" style="left:238.5px;top:346px;transform:scaleX(0.8305);">PARTNER_KOD</span>
<span class="t msb" id="t85" style="left:12px;top:369px;transform:scaleX(0.8294);">7</span>
<span class="t ms" id="t86" style="left:51.5px;top:366px;transform:scaleX(0.6911);">7</span>
<span class="t ms" id="t87" style="left:63px;top:366px;transform:scaleX(0.8035);">Partner név</span>
<span class="t ms" id="t88" style="left:238.5px;top:366px;transform:scaleX(0.8325);">PARTNER_NEV</span>
<span class="t ms" id="t89" style="left:12px;top:389px;transform:scaleX(0.6911);">8</span>
<span class="t ms" id="t90" style="left:51.5px;top:386px;transform:scaleX(0.6911);">8</span>
<span class="t ms" id="t91" style="left:63px;top:386px;transform:scaleX(0.7879);">Számlázási cím ir.szám</span>
<span class="t ms" id="t92" style="left:238.5px;top:386px;transform:scaleX(0.8223);">SZAMLAZASI_CIM_IRANYITOSZAM</span>
<span class="t ms" id="t93" style="left:12px;top:409px;transform:scaleX(0.6911);">9</span>
<span class="t ms" id="t94" style="left:51.5px;top:406px;transform:scaleX(0.6911);">9</span>
<span class="t ms" id="t95" style="left:63px;top:406px;transform:scaleX(0.7977);">Számlázási cím település</span>
<span class="t ms" id="t96" style="left:238.5px;top:406px;transform:scaleX(0.8181);">SZAMLAZASI_CIM_TELEPULES</span>
<span class="t ms" id="t97" style="left:12px;top:429px;transform:scaleX(0.7603);">10</span>
<span class="t ms" id="t98" style="left:45.5px;top:426px;transform:scaleX(0.7603);">10</span>
<span class="t ms" id="t99" style="left:63px;top:426px;transform:scaleX(0.7983);">Számlázási cím (utca, hsz)</span>
<span class="t ms" id="t100" style="left:238.5px;top:426px;transform:scaleX(0.8127);">SZAMLAZASI_CIM</span>
<span class="t ms" id="t101" style="left:12px;top:449px;transform:scaleX(0.8148);">11</span>
<span class="t ms" id="t102" style="left:45.5px;top:446px;transform:scaleX(0.8148);">11</span>
<span class="t ms" id="t103" style="left:63px;top:446px;transform:scaleX(0.8026);">Számlázási cím ország kód</span>
<span class="t ms" id="t104" style="left:238.5px;top:446px;transform:scaleX(0.8162);">SZAMLAZASI_CIM_ORSZAG_KOD</span>
<span class="t ms" id="t105" style="left:12px;top:469px;transform:scaleX(0.7603);">12</span>
<span class="t ms" id="t106" style="left:45.5px;top:466px;transform:scaleX(0.7603);">12</span>
<span class="t ms" id="t107" style="left:63px;top:466px;transform:scaleX(0.8026);">Számlázási cím ország kód</span>
<span class="t ms" id="t108" style="left:238.5px;top:466px;transform:scaleX(0.8171);">SZAMLAZASI_CIM_ORSZAG_NEV</span>
<span class="t ms" id="t109" style="left:12px;top:489px;transform:scaleX(0.7603);">13</span>
<span class="t ms" id="t110" style="left:45.5px;top:486px;transform:scaleX(0.7603);">13</span>
<span class="t ms" id="t111" style="left:63px;top:486px;transform:scaleX(0.8205);">Szállítási cím kód</span>
<span class="t ms" id="t112" style="left:238.5px;top:486px;transform:scaleX(0.8203);">SZALLITASI_CIM_KOD</span>
<span class="t ms" id="t113" style="left:12px;top:509px;transform:scaleX(0.7603);">14</span>
<span class="t ms" id="t114" style="left:45.5px;top:506px;transform:scaleX(0.7603);">14</span>
<span class="t ms" id="t115" style="left:63px;top:506px;transform:scaleX(0.8205);">Szállítási cím név</span>
<span class="t ms" id="t116" style="left:238.5px;top:506px;transform:scaleX(0.8216);">SZALLITASI_CIM_NEV</span>
<span class="t ms" id="t117" style="left:12px;top:529px;transform:scaleX(0.7603);">15</span>
<span class="t ms" id="t118" style="left:45.5px;top:526px;transform:scaleX(0.7603);">15</span>
<span class="t ms" id="t119" style="left:63px;top:526px;transform:scaleX(0.7993);">Szállítási cím ir.szám</span>
<span class="t ms" id="t120" style="left:238.5px;top:526px;transform:scaleX(0.8266);">SZALLITASI_CIM_IRANYITOSZAM</span>
<span class="t ms" id="t121" style="left:12px;top:549px;transform:scaleX(0.7603);">16</span>
<span class="t ms" id="t122" style="left:45.5px;top:546px;transform:scaleX(0.7603);">16</span>
<span class="t ms" id="t123" style="left:63px;top:546px;transform:scaleX(0.8092);">Szállítási cím település</span>
<span class="t ms" id="t124" style="left:238.5px;top:546px;transform:scaleX(0.8229);">SZALLITASI_CIM_TELEPULES</span>
<span class="t ms" id="t125" style="left:12px;top:569px;transform:scaleX(0.7603);">17</span>
<span class="t ms" id="t126" style="left:45.5px;top:566px;transform:scaleX(0.7603);">17</span>
<span class="t ms" id="t127" style="left:63px;top:566px;transform:scaleX(0.8092);">Szállítási cím (utca, hsz)</span>
<span class="t ms" id="t128" style="left:238.5px;top:566px;transform:scaleX(0.8208);">SZALLITASI_CIM</span>
<span class="t ms" id="t129" style="left:12px;top:589px;transform:scaleX(0.7603);">18</span>
<span class="t ms" id="t130" style="left:45.5px;top:586px;transform:scaleX(0.7603);">18</span>
<span class="t ms" id="t131" style="left:63px;top:586px;transform:scaleX(0.8137);">Szállítási cím ország kód</span>
<span class="t ms" id="t132" style="left:238.5px;top:586px;transform:scaleX(0.8205);">SZALLITASI_CIM_ORSZAG_KOD</span>
<span class="t ms" id="t133" style="left:12px;top:609px;transform:scaleX(0.7603);">19</span>
<span class="t ms" id="t134" style="left:45.5px;top:606px;transform:scaleX(0.7603);">19</span>
<span class="t ms" id="t135" style="left:63px;top:606px;transform:scaleX(0.8137);">Szállítási cím ország név</span>
<span class="t ms" id="t136" style="left:238.5px;top:606px;transform:scaleX(0.8214);">SZALLITASI_CIM_ORSZAG_NEV</span>
<span class="t ms" id="t137" style="left:12px;top:629px;transform:scaleX(0.7603);">20</span>
<span class="t ms" id="t138" style="left:45.5px;top:626px;transform:scaleX(0.7603);">20</span>
<span class="t ms" id="t139" style="left:63px;top:626px;transform:scaleX(0.8154);">Útiokmány típus</span>
<span class="t ms" id="t140" style="left:238.5px;top:626px;transform:scaleX(0.8263);">SZALLITASI_CIM_UTIOKMANY_TIPUS</span>
<span class="t ms" id="t141" style="left:12px;top:649px;transform:scaleX(0.7603);">21</span>
<span class="t ms" id="t142" style="left:45.5px;top:646px;transform:scaleX(0.7603);">21</span>
<span class="t ms" id="t143" style="left:63px;top:646px;transform:scaleX(0.8038);">Kiszállítás prioritás kódja</span>
<span class="t ms" id="t144" style="left:238.5px;top:646px;transform:scaleX(0.8295);">KISZALLITAS_PRIORITAS_KOD</span>
<span class="t ms" id="t145" style="left:12px;top:669px;transform:scaleX(0.7603);">22</span>
<span class="t ms" id="t146" style="left:45.5px;top:666px;transform:scaleX(0.7603);">22</span>
<span class="t ms" id="t147" style="left:63px;top:666px;transform:scaleX(0.8028);">Rendelés dátum</span>
<span class="t ms" id="t148" style="left:238.5px;top:666px;transform:scaleX(0.8322);">RENDELES_DATUM</span>
<span class="t ms" id="t149" style="left:12px;top:689px;transform:scaleX(0.7603);">23</span>
<span class="t ms" id="t150" style="left:45.5px;top:686px;transform:scaleX(0.7603);">23</span>
<span class="t ms" id="t151" style="left:63px;top:686px;transform:scaleX(0.8303);">Teljesítés dátum</span>
<span class="t ms" id="t152" style="left:238.5px;top:686px;transform:scaleX(0.8291);">TELJESITES_DATUM</span>
<span class="t ms" id="t153" style="left:12px;top:709px;transform:scaleX(0.7603);">24</span>
<span class="t ms" id="t154" style="left:45.5px;top:706px;transform:scaleX(0.7603);">24</span>
<span class="t ms" id="t155" style="left:63px;top:706px;transform:scaleX(0.8128);">Üzenet a szállításszervezésnek</span>
<span class="t ms" id="t156" style="left:238.5px;top:706px;transform:scaleX(0.8313);">UZENET_A_SZALLITASSZERVEZESNEK</span>
<span class="t ms" id="t157" style="left:12px;top:729px;transform:scaleX(0.7603);">25</span>
<span class="t ms" id="t158" style="left:45.5px;top:726px;transform:scaleX(0.7603);">25</span>
<span class="t ms" id="t159" style="left:63px;top:726px;transform:scaleX(0.8193);">Üzenet a raktárnak</span>
<span class="t ms" id="t160" style="left:238.5px;top:726px;transform:scaleX(0.8331);">UZENET_A_RAKTARNAK</span>
<span class="t ms" id="t161" style="left:12px;top:749px;transform:scaleX(0.7603);">26</span>
<span class="t ms" id="t162" style="left:45.5px;top:746px;transform:scaleX(0.7603);">26</span>
<span class="t ms" id="t163" style="left:63px;top:746px;transform:scaleX(0.8220);">Üzenet a gépjárművezetőnek</span>
<span class="t ms" id="t164" style="left:238.5px;top:746px;transform:scaleX(0.8235);">UZENET_A_GEPJARMUVEZETONEK</span>
<span class="t ms" id="t165" style="left:1185.5px;top:307px;transform:scaleX(0.8095);color:#dcd8fa;">XML tag feltöltes</span>
<span class="t ms" id="t166" style="left:1184.5px;top:306px;transform:scaleX(0.8095);color:#6d66a3;">XML tag feltöltes</span>
<span class="t ms" id="t167" style="left:1209.5px;top:422px;transform:scaleX(0.7751);">Törlés</span>
<span class="t ms" id="t168" style="left:1217px;top:538px;transform:scaleX(0.7197);">Fel</span>
<span class="t ms" id="t169" style="left:1218px;top:654px;transform:scaleX(0.7603);">Le</span>
<span class="t st" id="t170" style="left:6px;top:775px;transform:scaleX(0.9762);">-v1.93pre4X</span>
<span class="t st" id="t171" style="left:71px;top:775px;transform:scaleX(0.9468);">7 / 55</span>
<span class="t st" id="t172" style="left:225px;top:775px;transform:scaleX(0.9603);">[Transzfer tábla oszlop]-&gt;Az oszlop implemetációs neve</span>
</div>
</body></html>
